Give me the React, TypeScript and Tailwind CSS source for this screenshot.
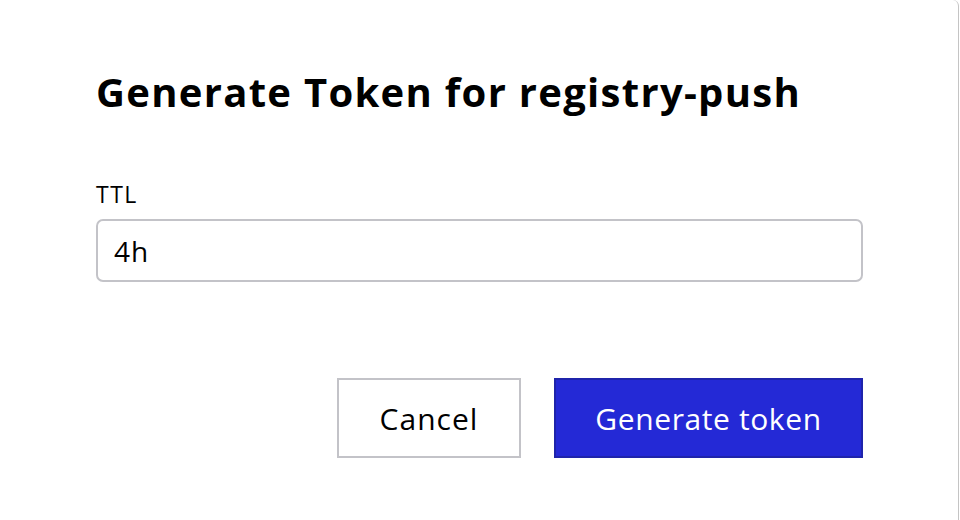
export default function App() {
  return (
    <div className="w-[960px] h-[520px] bg-white overflow-hidden" style={{ fontFamily: '"Open Sans", "Noto Sans", sans-serif' }}>
      <div className="w-[959px] h-[520px] border-r border-[#c4c4c4] rounded-tr-md pl-[96px] pr-[96px] pt-[66px]">
        <h1 className="text-[40px] leading-[52px] font-bold tracking-[1.3px] text-black">Generate Token for registry-push</h1>

        <div className="mt-[64px]">
          <label className="block text-[23px] leading-[24px] tracking-[1.5px] text-black">TTL</label>
          <input
            defaultValue="4h"
            className="mt-[13px] w-[767px] h-[63px] border-2 border-[#c3c3c8] rounded-[7px] px-[16px] text-[28px] tracking-[1px] text-black outline-none"
          />
        </div>

        <div className="mt-[96px] w-[767px] flex justify-end gap-[33px]">
          <button className="w-[184px] h-[80px] border-2 border-[#c3c3c8] bg-white text-[30px] tracking-[1px] text-black">
            Cancel
          </button>
          <button className="w-[309px] h-[80px] border-2 border-[#1f24ab] bg-[#2429d6] text-[30px] tracking-[0.6px] text-white">
            Generate token
          </button>
        </div>
      </div>
    </div>
  );
}
